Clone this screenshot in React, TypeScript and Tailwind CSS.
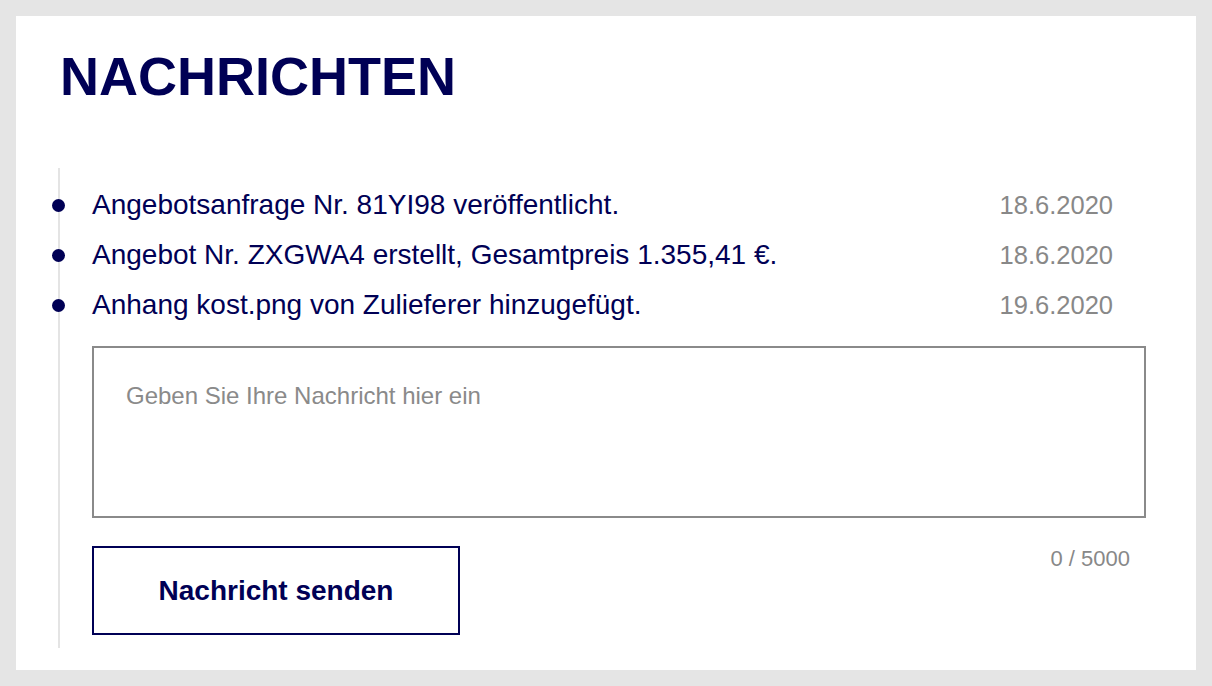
const messages = [
  { id: 1, text: 'Angebotsanfrage Nr. 81YI98 veröffentlicht.', date: '18.6.2020' },
  { id: 2, text: 'Angebot Nr. ZXGWA4 erstellt, Gesamtpreis 1.355,41 €.', date: '18.6.2020' },
  { id: 3, text: 'Anhang kost.png von Zulieferer hinzugefügt.', date: '19.6.2020' },
]

const font = { fontFamily: '"Liberation Sans", Arial, Helvetica, sans-serif' }

export default function App() {
  return (
    <div className="min-h-screen bg-[#e5e5e5] p-4" style={font}>
      <div className="bg-white pt-[33px] pb-[22px] pl-[42px] pr-[50px]">
        <h1 className="ml-[2px] text-[54px] leading-none font-bold text-[#000055]">NACHRICHTEN</h1>

        {/* Timeline */}
        <div className="mt-[65px] border-l-2 border-[#e4e4e4] pl-[32px] pt-[12px] pb-[13px]">
          <ul>
            {messages.map((m) => (
              <li key={m.id} className="relative flex h-[50px] items-baseline justify-between">
                <span className="absolute left-[-40px] top-[19px] h-[13px] w-[13px] rounded-full bg-[#000055]" />
                <span className="text-[28px] leading-[50px] text-[#000055]">{m.text}</span>
                <span className="mr-[33px] text-[25.5px] leading-[50px] text-[#888888]">{m.date}</span>
              </li>
            ))}
          </ul>

          <textarea
            className="mt-[16px] block h-[172px] w-full resize-none border-2 border-[#8a8a8a] px-[32px] py-[30px] text-[24px] leading-[36px] text-[#000055] placeholder:text-[#8a8a8a] outline-none"
            placeholder="Geben Sie Ihre Nachricht hier ein"
          />

          <div className="mt-[28px] flex items-start justify-between">
            <button className="h-[89px] w-[368px] border-2 border-[#000055] bg-white text-[28px] font-bold text-[#000055]">
              Nachricht senden
            </button>
            <span className="mr-[16px] text-[22px] leading-[26px] text-[#888888]">0 / 5000</span>
          </div>
        </div>
      </div>
    </div>
  )
}
